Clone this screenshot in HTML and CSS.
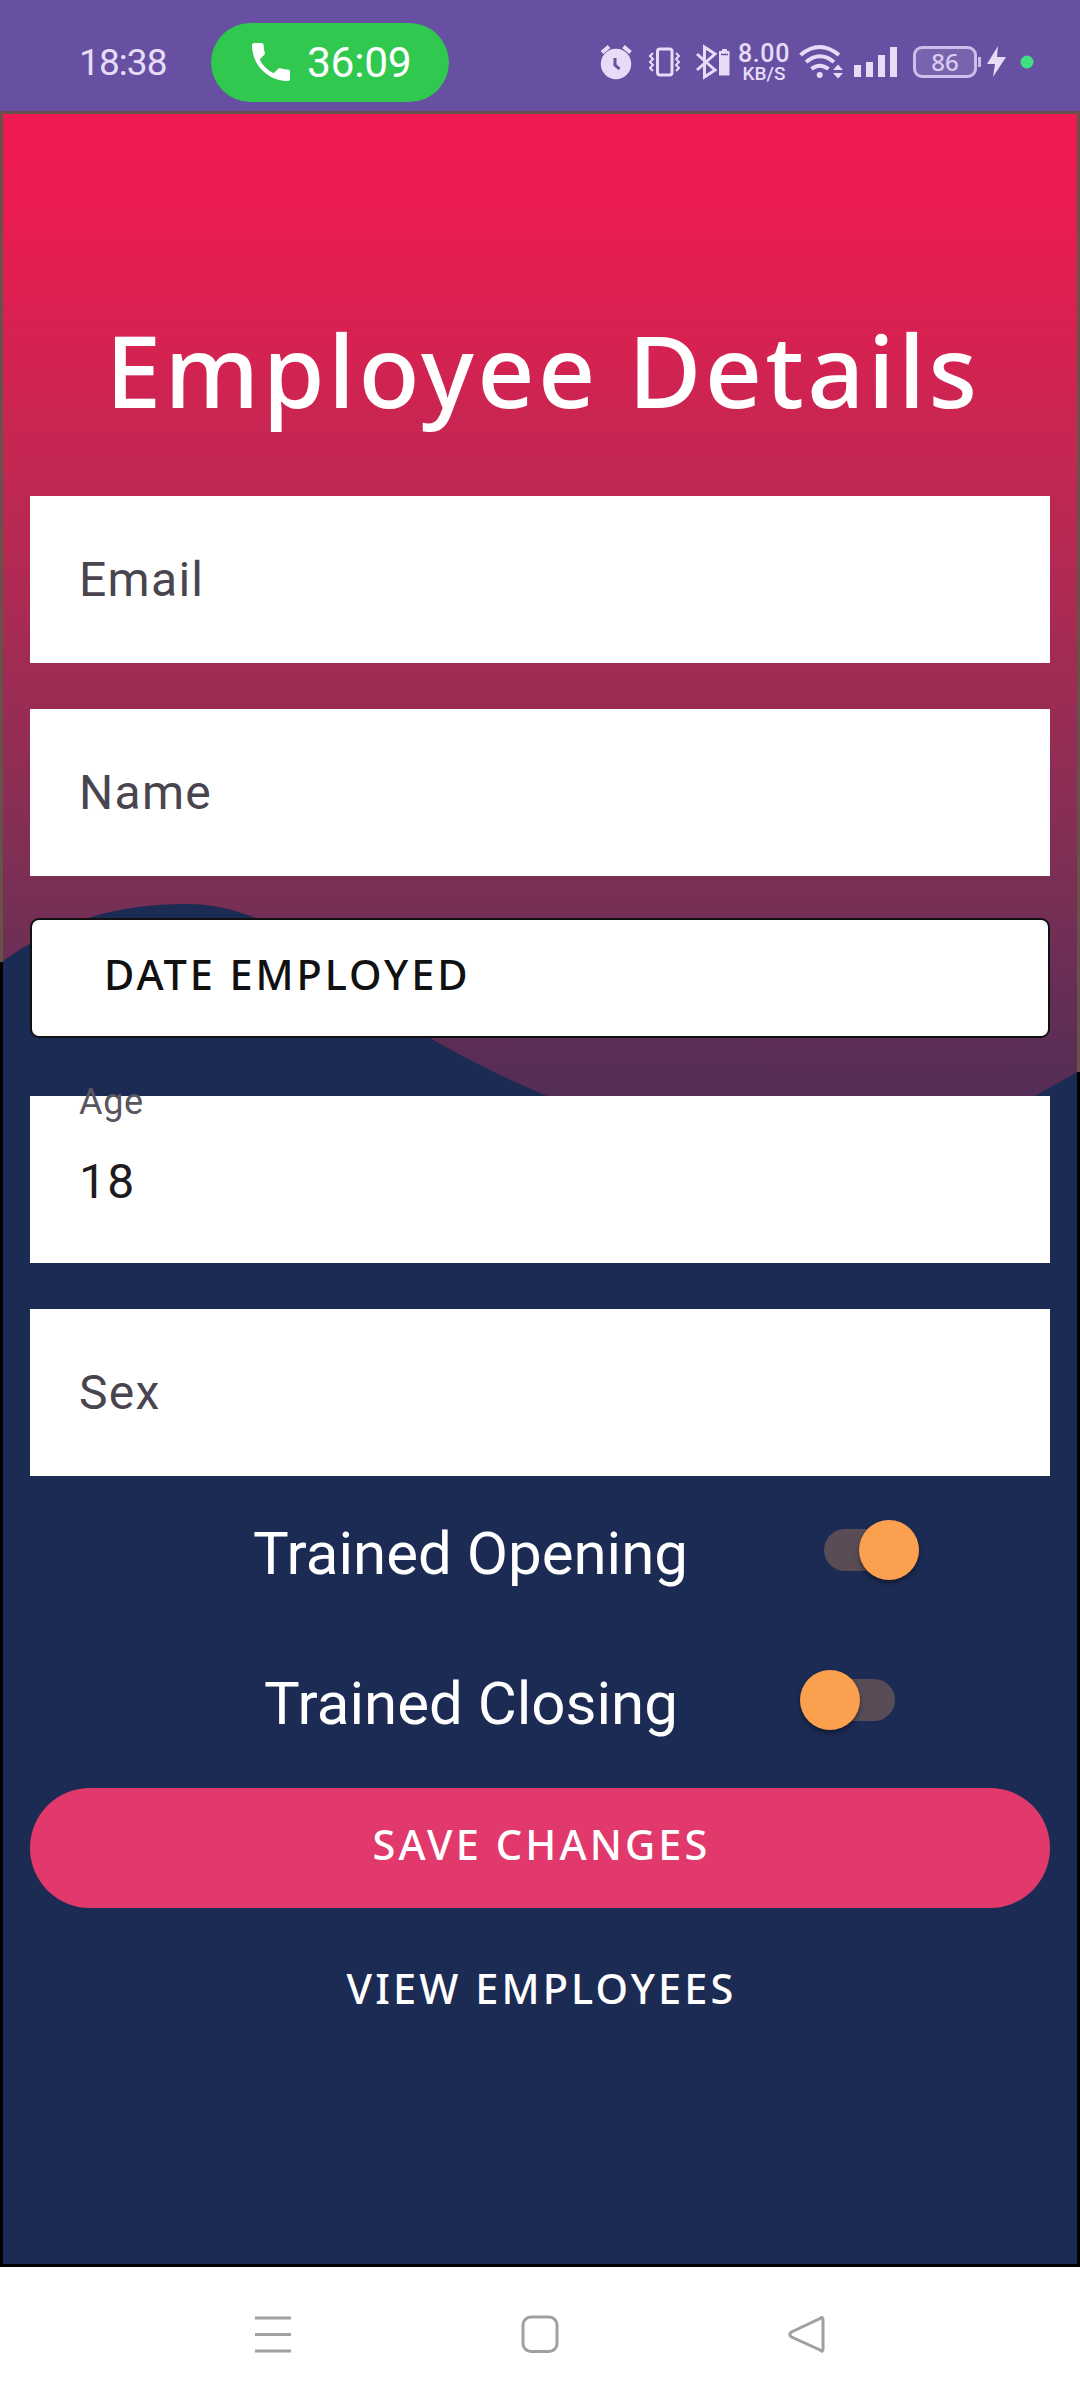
FILE: index.html
```html
<!DOCTYPE html>
<html lang="en">
<head>
<meta charset="utf-8">
<title>Employee Details</title>
<link rel="stylesheet" href="styles.css">
</head>
<body>
<header class="status">
  <span class="clock">18:38</span>
  <div class="call">
    <svg class="phone" width="38" height="38" viewBox="3 3 18 18"><path d="M6.62 10.79c1.44 2.83 3.76 5.14 6.59 6.59l2.2-2.2c.27-.27.67-.36 1.02-.24 1.12.37 2.33.57 3.57.57.55 0 1 .45 1 1V20c0 .55-.45 1-1 1C10.610 21 3 13.390 3 4c0-.55.45-1 1-1h3.500c.55 0 1 .45 1 1 0 1.250.2 2.450.57 3.570.11.35.03.74-.25 1.020z"/></svg>
    <span>36:09</span>
  </div>
  <div class="indicators">
    <svg width="48" height="44" viewBox="600 40 48 44"><circle cx="616" cy="64" r="15.200" fill="currentColor"/><path d="M602 52.500l7-6M630.500 52.500l-7-6" stroke="currentColor" stroke-width="4"/><path d="M615 58v7l4.500 4" stroke="#6750a2" stroke-width="3" fill="none"/></svg>
    <svg width="47" height="44" viewBox="648 40 47 44" fill="none" stroke="currentColor"><rect x="657.500" y="49" width="14.500" height="26" rx="2.500" stroke-width="3"/><path d="M653 53l-3 3 3 3-3 3 3 3-3 3 3 3M676 53l3 3-3 3 3 3-3 3 3 3-3 3" stroke-width="2"/></svg>
    <svg width="42" height="44" viewBox="695 40 42 44"><path d="M697 54l18 16-10.500 7V47l10.500 7-18 16" fill="none" stroke="currentColor" stroke-width="3"/><path d="M722 49h5v2h2.500v24.500h-10.500V51h3z" fill="currentColor"/><path d="M721 54.500h7" stroke="#6750a2" stroke-width="1.500"/></svg>
    <div class="speed"><b>8.00</b><span>KB/S</span></div>
    <svg width="61" height="44" viewBox="791 40 61 44" fill="none" stroke="currentColor" stroke-width="4"><path d="M800.500 55q19-16 38.500 0M806 62q14-11.500 28 0M811.500 69q8-6.500 17 0"/><circle cx="819.700" cy="75" r="3" fill="currentColor" stroke="none"/><path d="M833 70l5-5.500 5 5.500zM833 73h10l-5 5.500z" fill="currentColor" stroke="none"/></svg>
    <svg width="56" height="44" viewBox="852 40 56 44" fill="currentColor"><path d="M854 65h7v12h-7zM866 62h7v15h-7zM878 55h7v22h-7zM890 47h7v30h-7z"/></svg>
    <div class="battery">86</div>
    <svg width="54" height="44" viewBox="980 40 54 44"><path d="M998 46l-11 18h8l-2 13 13-20h-9z" fill="currentColor"/><circle cx="1027" cy="62" r="6.500" fill="#40e080"/></svg>
  </div>
</header>
<main class="app">
  <svg class="backdrop" width="1080" height="2156" viewBox="0 111 1080 2156">
    <defs><linearGradient id="sky" gradientUnits="userSpaceOnUse" x1="0" y1="111" x2="0" y2="1111">
      <stop offset="0" stop-color="#f01a50"/><stop offset=".1" stop-color="#ea1c50"/><stop offset=".38" stop-color="#bf2852"/><stop offset=".76" stop-color="#7d2f55"/><stop offset="1" stop-color="#502d55"/>
    </linearGradient></defs>
    <rect y="111" width="1080" height="2156" fill="#000"/>
    <path d="M0 111H1080V1072H0z" fill="#675148"/><path d="M0 962H3V1073H0z" fill="#000"/>
    <rect x="3" y="114" width="1074" height="2150" fill="url(#sky)"/>
    <path d="M3 961C60 921 115 904 187 904C285 904 360 990 430 1038Q485 1070 545 1095C680 1150 900 1170 1037 1095L1077 1072V2264H3z" fill="#1c2b53"/>
  </svg>
  <h1>Employee Details</h1>
  <div class="field"><span>Email</span></div>
  <div class="field"><span>Name</span></div>
  <div class="date">DATE EMPLOYED</div>
  <div class="field filled"><label>Age</label><span>18</span></div>
  <div class="field"><span>Sex</span></div>
  <div class="toggle opening"><span>Trained Opening</span><i class="switch on"></i></div>
  <div class="toggle closing"><span>Trained Closing</span><i class="switch"></i></div>
  <div class="save">SAVE CHANGES</div>
  <div class="view">VIEW EMPLOYEES</div>
</main>
<nav class="nav">
  <svg width="38" height="38" viewBox="0 0 38 38"><path d="M1 3h36M1 19.500h36M1 36h36"/></svg>
  <svg width="38" height="38" viewBox="0 0 38 38"><rect x="2" y="2" width="34" height="34.500" rx="8"/></svg>
  <svg width="38" height="38" viewBox="0 0 38 38"><path d="M32 3.500Q35 1 35 5V34Q35 38 32 35L3.500 22Q0 19.500 3.500 17z"/></svg>
</nav>
</body>
</html>
```

FILE: styles.css
```css
* { box-sizing: border-box; }
body { margin: 0; width: 1080px; height: 2400px; display: flex; flex-direction: column; font-family: Roboto, sans-serif; background: #fff; overflow: hidden; }
.status { height: 111px; background: #6750a2; color: #e6dcf8; display: flex; align-items: center; padding: 13px 46px 0 79px; }
.clock { width: 132px; font-size: 37px; letter-spacing: -0.9px; line-height: 42px; padding-top: 2px; }
.call { width: 238px; height: 79px; border-radius: 40px; background: #30c84e; color: #fff; display: flex; align-items: center; padding-left: 41px; gap: 17px; font-size: 42.5px; letter-spacing: -0.3px; }
.phone { fill: currentColor; }
.indicators { display: flex; margin-left: auto; height: 44px; }
.indicators svg { display: block; flex: none; }
.speed { width: 54px; display: flex; flex-direction: column; align-items: center; font-family: Roboto, sans-serif; font-weight: 500; }
.speed b { font-size: 25px; line-height: 28px; height: 24px; font-weight: 500; letter-spacing: .6px; }
.speed span { font-size: 19px; line-height: 20px; }
.battery { position: relative; flex: none; width: 64px; height: 32px; margin: 6px 3px 0 5px; border: 3px solid #cdbdea; border-radius: 9px; font: 500 24px/26px "Noto Sans", sans-serif; text-align: center; background: #7863af; color: #d8ccef; }
.battery::after { content: ""; position: absolute; right: -7px; top: 8px; width: 3px; height: 10px; background: #cdbdea; }
.app { position: relative; height: 2156px; display: flex; flex-direction: column; padding: 0 30px; }
.backdrop { position: absolute; left: 0; top: 0; z-index: -1; }
h1 { margin: 190px 0 0; padding-left: 6px; height: 195px; text-align: center; color: #fff; font: 500 100px/136px "Noto Sans", sans-serif; letter-spacing: 3.4px; white-space: nowrap; }
.field { position: relative; height: 167px; margin-bottom: 46px; padding: 0 49px; background: #fff; color: #49454f; font-size: 48px; letter-spacing: 1.3px; display: flex; align-items: center; }
.date { height: 120px; margin: -4px 0 58px; border: 2px solid #111; border-radius: 9px; background: #fff; color: #111; padding: 0 72px; font: 500 41.5px/109px "Noto Sans", sans-serif; letter-spacing: 2.9px; }
.filled { color: #1d1b20; padding-top: 4px; }
.field label { position: absolute; top: -15px; font-size: 36px; line-height: 42px; letter-spacing: .7px; color: #5a565f; }
.toggle { height: 150px; color: #fff; font-size: 60px; line-height: 71px; display: flex; justify-content: space-between; white-space: nowrap; }
.opening { margin-top: -74px; padding: 70px 131px 0 223px; }
.closing { padding: 70px 155px 0 234px; }
.switch { position: relative; width: 95px; height: 42px; margin-top: 11px; border-radius: 21px; background: #594c54; }
.switch::after { content: ""; position: absolute; left: 0; top: -9px; width: 60px; height: 60px; border-radius: 50%; background: #faa04f; box-shadow: 0 3px 5px rgba(0,0,0,.4); }
.switch.on::after { left: 35px; }
.save, .view { height: 120px; padding-left: 3px; text-align: center; color: #fff; font: 500 41.5px/112px "Noto Sans", sans-serif; letter-spacing: 3.1px; }
.save { border-radius: 60px; background: #e1396c; margin-top: 40px; }
.view { margin-top: 24px; }
.nav { height: 133px; background: #fff; display: flex; justify-content: space-between; padding: 48px 254px 0; }
.nav svg { fill: none; stroke: #a0a0a0; stroke-width: 3; }
```
